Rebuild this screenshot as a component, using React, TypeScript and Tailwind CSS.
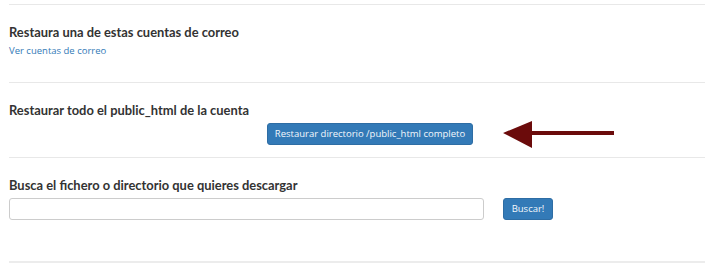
import React from "react";

export default function App() {
  const head = "font-bold text-[12.9px] leading-[16px] text-[#333333]";
  return (
    <div className="relative w-[705px] h-[265px] bg-white overflow-hidden" style={{ fontFamily: '"Open Sans", sans-serif' }}>
      <div className="pl-[9px] pt-[4px]">
        <div className="border-t border-[#e8e8e8]" />
        <div className="h-[77px] pt-[19px]">
          <h3 className={head} style={{ fontFamily: 'Lato, "Open Sans", sans-serif' }}>Restaura una de estas cuentas de correo</h3>
          <a className="block mt-[4px] text-[9.5px] leading-[14px] text-[#337ab7]">Ver cuentas de correo</a>
        </div>
        <div className="border-t border-[#e8e8e8]" />
        <div className="h-[74px] pt-[19px]">
          <h3 className={head} style={{ fontFamily: 'Lato, "Open Sans", sans-serif' }}>Restaurar todo el public_html de la cuenta</h3>
          <button className="ml-[258px] mt-[5px] w-[206px] h-[22px] rounded-[3px] bg-[#337ab7] border border-[#2e6da4] text-[#f4f8fc] text-[9.5px] leading-[20px] whitespace-nowrap">
            Restaurar directorio /public_html completo
          </button>
        </div>
        <div className="border-t border-[#e8e8e8]" />
        <div className="h-[103px] pt-[19px]">
          <h3 className={head} style={{ fontFamily: 'Lato, "Open Sans", sans-serif' }}>Busca el fichero o directorio que quieres descargar</h3>
          <div className="flex items-center mt-[5px] gap-[19px]">
            <input className="w-[475px] h-[22px] border border-[#cccccc] rounded-[3px] bg-white" />
            <button className="w-[50px] h-[22px] rounded-[3px] bg-[#337ab7] border border-[#2e6da4] text-[#f4f8fc] text-[9.5px] leading-[20px] whitespace-nowrap">Buscar!</button>
          </div>
        </div>
        <div className="border-t-2 border-[#ececec]" />
      </div>
      <svg className="absolute left-[500px] top-[118px]" width="118" height="34" viewBox="0 0 118 34">
        <polygon points="3,15 32,3 32,13 114,13 114,17 32,17 32,30" fill="#6b0b0b" />
      </svg>
    </div>
  );
}
